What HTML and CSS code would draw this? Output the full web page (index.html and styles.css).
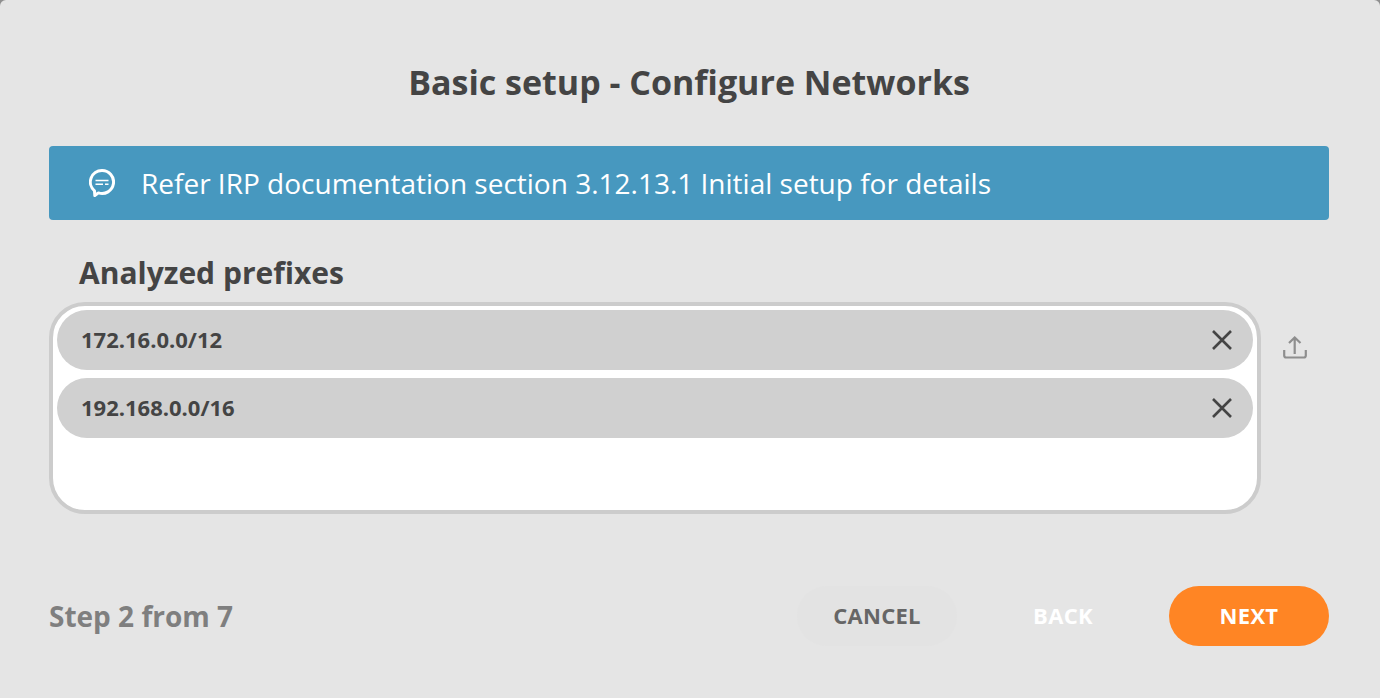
FILE: index.html
```html
<!DOCTYPE html>
<html lang="en">
<head>
<meta charset="utf-8">
<title>Basic setup - Configure Networks</title>
<link rel="stylesheet" href="styles.css">
</head>
<body>
<main class="dialog">
  <h1 class="title">Basic setup - Configure Networks</h1>
  <div class="banner">
    <svg class="banner-icon" viewBox="0 0 26 28" width="26" height="28" aria-hidden="true">
      <path d="M13 1.500a11.500 11.500 0 1 1-3.600 22.400L5.800 26.500l-.3-4.700A11.500 11.500 0 0 1 13 1.500z" fill="none" stroke="#fff" stroke-width="3" stroke-linejoin="round"/>
      <path d="M6.500 11.500h13M6.500 15.300h7.500M16 15.300h3.500" fill="none" stroke="#fff" stroke-width="1.500"/>
    </svg>
    <span>Refer IRP documentation section 3.12.13.1 Initial setup for details</span>
  </div>
  <h2 class="label">Analyzed prefixes</h2>
  <div class="field-row">
    <div class="chips">
      <div class="chip"><span>172.16.0.0/12</span>
        <svg class="chip-x" viewBox="0 0 20 20" width="20" height="20" aria-hidden="true"><path d="M1 1l18 18M19 1L1 19" stroke="#444" stroke-width="2.600" fill="none"/></svg>
      </div>
      <div class="chip"><span>192.168.0.0/16</span>
        <svg class="chip-x" viewBox="0 0 20 20" width="20" height="20" aria-hidden="true"><path d="M1 1l18 18M19 1L1 19" stroke="#444" stroke-width="2.600" fill="none"/></svg>
      </div>
    </div>
    <svg class="upload" viewBox="0 0 24 24" width="24" height="24" aria-hidden="true">
      <path d="M11.700 18V1.500M6 7l5.700-5.500L17.500 7M1.200 14v5.500a2 2 0 0 0 2 2h17.600a2 2 0 0 0 2-2V14" fill="none" stroke="#8e8e8e" stroke-width="2.200"/>
    </svg>
  </div>
  <footer class="footer">
    <span class="step">Step 2 from 7</span>
    <div class="actions">
      <button class="btn btn-cancel">CANCEL</button>
      <button class="btn btn-back">BACK</button>
      <button class="btn btn-next">NEXT</button>
    </div>
  </footer>
</main>
</body>
</html>
```
FILE: styles.css
```css
* { box-sizing: border-box; }
html, body { margin: 0; height: 100%; }
body { background: #8f8f8f; font-family: "Open Sans", sans-serif; color: #444; overflow: hidden; }
.dialog { padding: 60px 51px 0 49px; height: 698px; display: flex; flex-direction: column; background: #e5e5e5; border-radius: 6px 6px 0 0; }
.title { margin: 0; font-size: 34px; line-height: 44px; font-weight: 700; text-align: center; color: #444; }
.banner { margin-top: 42px; height: 74px; background: #4798bf; border-radius: 4px; color: #fff; display: flex; align-items: center; padding-left: 40px; font-size: 28px; gap: 26px; }
.banner-icon { flex: none; }
.label { margin: 34px 0 0 30px; font-size: 30px; line-height: 38px; font-weight: 700; color: #444; }
.field-row { margin-top: 10px; display: flex; align-items: flex-start; }
.chips { width: 1212px; height: 212px; background: #fff; border: 4px solid #ccc; border-radius: 36px; padding: 4px; display: flex; flex-direction: column; gap: 8px; }
.chip { height: 60px; border-radius: 30px; background: #d0d0d0; display: flex; align-items: center; justify-content: space-between; padding: 0 21px 0 24px; font-size: 22px; font-weight: 700; color: #444; }
.chip span { padding-bottom: 2px; }
.chip-x { flex: none; }
.upload { margin: 34px 0 0 22px; flex: none; }
.footer { margin-top: 72px; display: flex; align-items: center; justify-content: space-between; }
.step { font-size: 28px; font-weight: 700; color: #7f7f7f; }
.actions { display: flex; gap: 52px; }
.btn { width: 160px; height: 60px; border: 0; border-radius: 30px; padding: 0 0 2px; font: 700 22px "Open Sans", sans-serif; letter-spacing: .3px; background: transparent; }
.btn-cancel { background: #e3e3e3; color: #666; }
.btn-back { color: #fff; width: 108px; }
.btn-next { background: #ff8524; color: #fff; }
```
